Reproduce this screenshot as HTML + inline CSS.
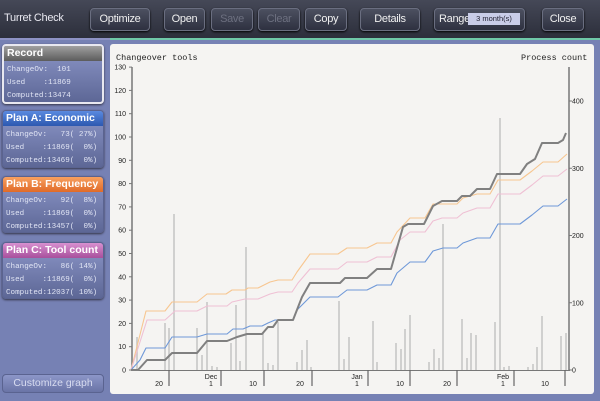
<!DOCTYPE html><html><head><style>
*{margin:0;padding:0;box-sizing:border-box}
body{width:600px;height:401px;overflow:hidden;background:#7681b4;font-family:"Liberation Sans",sans-serif;position:relative}
#top{position:absolute;left:0;top:0;width:600px;height:38px;background:linear-gradient(#454857,#2c2f3b)}
#stripe{position:absolute;left:0;top:38px;width:600px;height:2px;background:#6fc8a8}
#stripe i{position:absolute;left:0;top:0;width:110px;height:2px;background:#8d92c4}
.t{position:absolute;left:4px;top:12px;color:#e8e8f0;font-size:11px;letter-spacing:-0.3px}
.b{position:absolute;top:8px;height:23px;border-radius:4px;background:linear-gradient(#4c5060,#2e3140);border:1px solid #6a6e80;color:#f0f0f0;font-size:11px;text-align:center;line-height:21px;box-shadow:0 1px 2px #000;letter-spacing:-0.3px}
.b.d{color:#6d7080}
.rg{position:absolute;left:468px;top:13px;width:52px;height:12px;background:#c9cde8;color:#223;font-size:7.5px;line-height:12px;text-align:center}
.card{position:absolute;left:2px;width:102px;border-radius:4px;background:linear-gradient(#8c96c8,#5d6796);border:1px solid #5a6390;box-shadow:0 1px 2px #334;overflow:hidden}
.card h{display:block;height:15px;color:#fff;font-weight:bold;font-size:10.5px;line-height:15px;padding-left:3px;white-space:nowrap}
.card pre{font-family:"Liberation Mono",monospace;font-size:7.6px;color:#e0e4f4;line-height:13px;padding:3px 0 0 3px}
#cust{position:absolute;left:2px;top:374px;width:102px;height:19px;border-radius:4px;background:linear-gradient(#8c96c8,#6a74a6);border:1px solid #5a6390;color:#d8dcf0;font-size:10.5px;text-align:center;line-height:17px}
#panel{position:absolute;left:110px;top:44px;width:484px;height:350px;background:#f5f4f2;border-radius:3px}
</style></head><body>
<div id="top"><div class="t">Turret Check</div>
<div class="b" style="left:90px;width:60px">Optimize</div>
<div class="b" style="left:164px;width:41px">Open</div>
<div class="b d" style="left:211px;width:42px">Save</div>
<div class="b d" style="left:258px;width:42px">Clear</div>
<div class="b" style="left:305px;width:42px">Copy</div>
<div class="b" style="left:360px;width:60px">Details</div>
<div class="b" style="left:434px;width:91px;text-align:left;padding-left:4px">Range</div><div class="rg">3 month(s)</div>
<div class="b" style="left:542px;width:42px">Close</div>
</div>
<div id="stripe"><i></i></div>
<div class="card" style="top:44px;height:60px;border:2px solid #e8e8f0"><h style="background:linear-gradient(#a0a0a0,#5c5c5c)">Record</h><pre>ChangeOv:  101
Used    :11869
Computed:13474</pre></div>
<div class="card" style="top:110px;height:58px"><h style="background:linear-gradient(#5a8ae0,#2c58b0)">Plan A: Economic</h><pre>ChangeOv:   73( 27%)
Used    :11869(  0%)
Computed:13469(  0%)</pre></div>
<div class="card" style="top:176px;height:57px"><h style="background:linear-gradient(#f8a060,#e06a28)">Plan B: Frequency</h><pre>ChangeOv:   92(  8%)
Used    :11869(  0%)
Computed:13457(  0%)</pre></div>
<div class="card" style="top:242px;height:57px"><h style="background:linear-gradient(#d890d0,#a8509c)">Plan C: Tool count</h><pre>ChangeOv:   86( 14%)
Used    :11869(  0%)
Computed:12037( 10%)</pre></div>
<div id="cust">Customize graph</div>
<div id="panel"></div>
<svg id="s" width="600" height="401" style="position:absolute;left:0;top:0" font-family="Liberation Sans" font-size="7"></svg>
<script>
var s=document.getElementById('s'),h='';
function Y(v){return 370-v*2.33}
h+='<text x="116" y="60" font-family="Liberation Mono" font-size="8.5" fill="#222">Changeover tools</text><text x="521" y="60" font-family="Liberation Mono" font-size="8.5" fill="#222">Process count</text>';
var bars=[[137,337],[165,323],[169,328],[174,214],[197,328],[202,355],[207,302],[212,366],[217,367],[231,343],[236,305],[240,361],[246,247],[263,333],[268,363],[273,365],[278,322],[297,362],[302,350],[307,340],[311,367],[339,301],[344,359],[349,337],[373,321],[377,362],[396,343],[401,349],[405,329],[410,315],[429,362],[434,349],[439,358],[443,224],[462,319],[467,358],[471,333],[476,335],[495,322],[500,118],[504,367],[509,366],[528,367],[533,364],[537,347],[542,316],[561,336],[566,333]];
bars.forEach(function(b){h+='<line x1="'+b[0]+'" y1="370" x2="'+b[0]+'" y2="'+b[1]+'" stroke="#c6c6c6" stroke-width="1.6"/>'});
h+='<line x1="132" y1="67" x2="132" y2="371" stroke="#777" stroke-width="1.5"/><line x1="569" y1="67" x2="569" y2="371" stroke="#777" stroke-width="1.5"/><line x1="131" y1="370.5" x2="570" y2="370.5" stroke="#777"/>';
for(var v=0;v<=130;v+=10){var y=Y(v);h+='<line x1="129" y1="'+y+'" x2="132" y2="'+y+'" stroke="#777"/><text x="126" y="'+(y+2.5)+'" text-anchor="end" fill="#222">'+v+'</text>'}
for(var v=0;v<=400;v+=100){var y=370-v*0.6725;h+='<line x1="569" y1="'+y+'" x2="572" y2="'+y+'" stroke="#777"/><text x="572" y="'+(y+2.5)+'" fill="#222">'+v+'</text>'}
[169,221,264,312,368,410,457,514,565].forEach(function(x){h+='<line x1="'+x+'" y1="370" x2="'+x+'" y2="386" stroke="#666" stroke-width="1.2"/>'});
[[159,'','20'],[211,'Dec','1'],[253,'','10'],[300,'','20'],[357,'Jan','1'],[400,'','10'],[447,'','20'],[503,'Feb','1'],[545,'','10']].forEach(function(l){h+='<text x="'+l[0]+'" y="379" text-anchor="middle" fill="#222">'+l[1]+'</text><text x="'+l[0]+'" y="386" text-anchor="middle" fill="#222">'+l[2]+'</text>'});
function pl(p,c,w){h+='<polyline fill="none" stroke="'+c+'" stroke-width="'+w+'" stroke-linejoin="round" points="'+p.join(' ')+'"/>'}
pl(['131,370','146,311','165,311','172,302','197,302','207,294','226,294','232,290','245,290','248,288','258,288','270,282','278,280','292,280','297,272','310,254','338,254','347,248','367,248','377,243','391,243','397,232','410,218','425,218','433,204','457,204','463,198','477,194','490,194','498,180','520,180','532,171','543,162','558,162','567,154'],'#f7c690',1.1);
pl(['131,370','147,320','165,320','175,311','197,311','207,306','227,306','232,302','245,299','258,299','270,294','278,292','292,292','298,283','310,269','338,269','347,262','367,262','377,257','391,257','400,240','410,232','425,232','433,221','442,218','457,218','463,213','477,208','490,208','498,194','520,194','532,185','543,176','558,176','567,169'],'#efc0d4',1.1);
pl(['131,370','140,360','146,348','165,348','172,337','197,337','207,334','227,334','233,329','243,329','250,326','262,326','268,323','275,320','293,320','297,310','310,297','338,297','347,290','367,290','377,285','391,285','397,273','410,262','425,262','433,251','443,248','457,248','463,243','477,238','490,238','498,224','520,224','532,215','543,206','558,206','567,199'],'#6e98d8',1.1);
pl(['131,370','138,370','147,360','165,360','172,353','197,353','207,341','227,341','237,337','247,334','262,334','268,327','273,327','278,320','293,320','302,297','310,283','340,283','345,278','367,278','377,269','391,269','403,227','408,224','424,224','433,206','442,201','457,201','462,196','470,196','477,189','490,189','497,174','520,174','527,164','535,159','542,143','558,143','563,140','566,133'],'#808080',2);
s.innerHTML=h;
</script>
</body></html>
